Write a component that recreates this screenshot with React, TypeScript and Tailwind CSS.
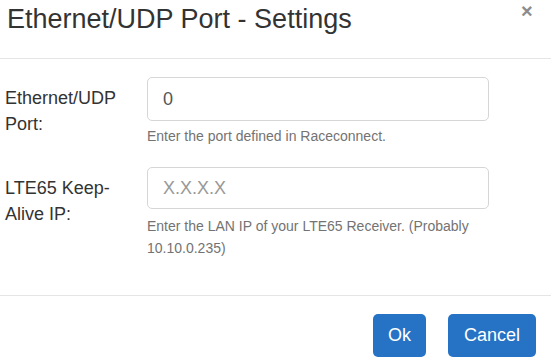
import React from "react";

export default function App() {
  return (
    <div className="w-[557px] h-[363px] bg-white overflow-hidden text-[#333] font-['Liberation_Sans',Arial,sans-serif]">
      <div className="w-[551px]">
        {/* Header */}
        <div className="relative h-[59px] border-b border-[#e5e5e5] pl-[7px] pt-[3px]">
          <h4 className="text-[27px] leading-[32px] font-normal text-[#333]">Ethernet/UDP Port - Settings</h4>
          <span className="absolute left-[521px] top-0 text-[20px] font-bold leading-[23px] text-[#8c8c8c]">×</span>
        </div>

        {/* Body */}
        <div className="pt-[18px] pb-[36px]">
          <div className="flex">
            <label className="w-[147px] pl-[5px] pt-[8px] pr-[20px] text-[18px] leading-[26px]">Ethernet/UDP Port:</label>
            <div className="w-[342px]">
              <div className="h-[44px] border border-[#d6d6d6] rounded-[5px] flex items-center pl-[15px] text-[18px] text-[#555]">0</div>
              <p className="mt-[5px] text-[14px] leading-[21px] text-[#737373]">Enter the port defined in Raceconnect.</p>
            </div>
          </div>
          <div className="flex mt-[20px]">
            <label className="w-[147px] pl-[5px] pt-[8px] pr-[20px] text-[18px] leading-[26px]">LTE65 Keep-Alive IP:</label>
            <div className="w-[342px]">
              <div className="h-[42px] border border-[#d6d6d6] rounded-[5px] flex items-center pl-[15px] text-[18px] text-[#999]">X.X.X.X</div>
              <p className="mt-[6px] text-[14px] leading-[22px] text-[#737373]">Enter the LAN IP of your LTE65 Receiver. (Probably 10.10.0.235)</p>
            </div>
          </div>
        </div>

        {/* Footer */}
        <div className="border-t border-[#e5e5e5] pt-[18px] pr-[15px] flex justify-end gap-[22px]">
          <button className="h-[43px] px-[15px] rounded-[5px] bg-[#2672c5] text-white text-[18px]">Ok</button>
          <button className="h-[43px] px-[16px] rounded-[5px] bg-[#2672c5] text-white text-[18px]">Cancel</button>
        </div>
      </div>
    </div>
  );
}
